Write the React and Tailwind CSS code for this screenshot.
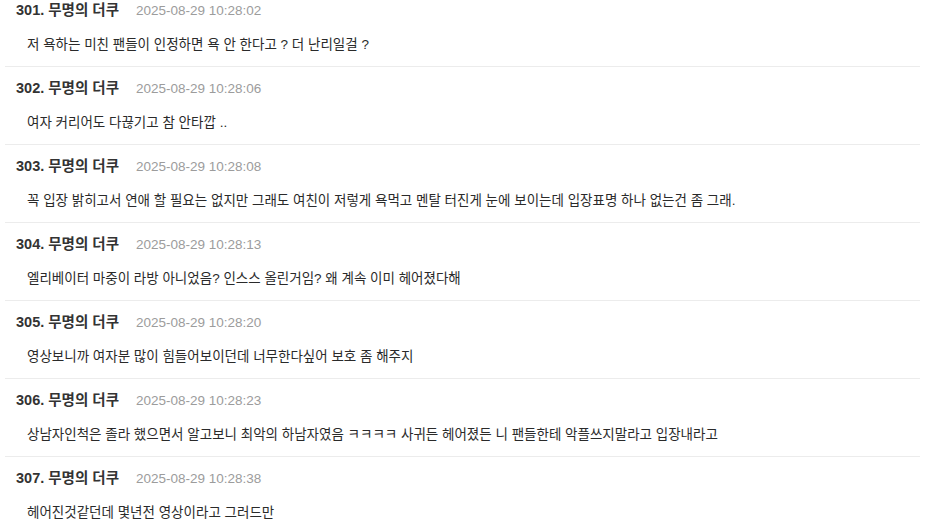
import React from 'react';

const comments = [
  { no: 301, time: '2025-08-29 10:28:02', text: '저 욕하는 미친 팬들이 인정하면 욕 안 한다고 ? 더 난리일걸 ?' },
  { no: 302, time: '2025-08-29 10:28:06', text: '여자 커리어도 다끊기고 참 안타깝 ..' },
  { no: 303, time: '2025-08-29 10:28:08', text: '꼭 입장 밝히고서 연애 할 필요는 없지만 그래도 여친이 저렇게 욕먹고 멘탈 터진게 눈에 보이는데 입장표명 하나 없는건 좀 그래.' },
  { no: 304, time: '2025-08-29 10:28:13', text: '엘리베이터 마중이 라방 아니었음? 인스스 올린거임? 왜 계속 이미 헤어졌다해' },
  { no: 305, time: '2025-08-29 10:28:20', text: '영상보니까 여자분 많이 힘들어보이던데 너무한다싶어 보호 좀 해주지' },
  { no: 306, time: '2025-08-29 10:28:23', text: '상남자인척은 졸라 했으면서 알고보니 최악의 하남자였음 ㅋㅋㅋㅋ 사귀든 헤어졌든 니 팬들한테 악플쓰지말라고 입장내라고' },
  { no: 307, time: '2025-08-29 10:28:38', text: '헤어진것같던데 몇년전 영상이라고 그러드만' },
];

const font = { fontFamily: '"Liberation Sans", "Noto Sans CJK KR", sans-serif' };

const CommentRow = ({ item }) => (
  <li className="border-b border-[#ececec] pl-[11px] pt-[12px] pb-[11px]">
    <div className="flex items-center h-[20px]">
      <span className="text-[14.5px] font-bold text-[#333333]">
        {item.no}. 무명의 더쿠
      </span>
      <span className="ml-[17px] text-[13.5px] text-[#9c9c9c]">{item.time}</span>
    </div>
    <p className="mt-[14px] h-[20px] leading-[20px] pl-[11px] text-[13.5px] text-[#2a2a2a]">
      {item.text}
    </p>
  </li>
);

const App = () => {
  return (
    <div className="w-[925px] h-[529px] overflow-hidden bg-white" style={font}>
      <ul className="ml-[5px] mr-[5px] -mt-[11px]">
        {comments.map((item) => (
          <CommentRow key={item.no} item={item} />
        ))}
      </ul>
    </div>
  );
};

export default App;
